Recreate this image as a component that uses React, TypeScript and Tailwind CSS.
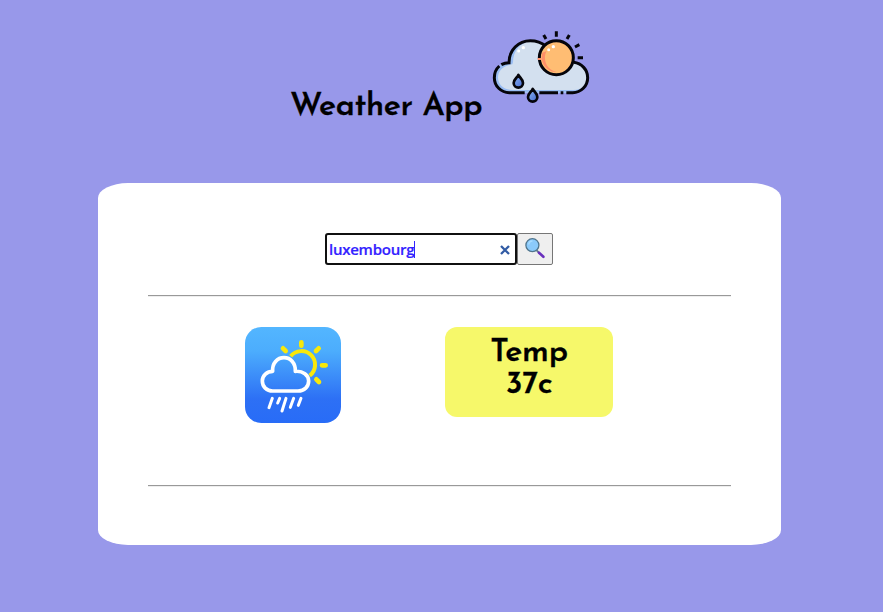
function CloudSunLogo() {
  return (
    <svg width="112" height="90" viewBox="0 0 336 270" className="-ml-2 -mr-2 block shrink-0" fill="none" aria-hidden="true">
      <defs>
        <linearGradient id="drop" x1="0" y1="0" x2="1" y2="1">
          <stop offset="0" stopColor="#8cb7f5" />
          <stop offset="1" stopColor="#4568cf" />
        </linearGradient>
      </defs>
      <path d="M72 212C47 212 28 192 28 167c0-25 19-45 44-46 0-37 27-65 62-65 29 0 50 15 59 40l72 25c25 2 43 22 43 46 0 25-19 45-44 45z" fill="#d3e0ef" />
      <path d="M72 212C47 212 28 192 28 167c0-25 19-45 44-46 0-37 27-65 62-65l8 1c-34 2-58 28-58 64l-2 6c-25 2-43 18-43 39 0 23 18 38 43 38h183c14 0 27-4 37-14-8 14-22 22-38 22z" fill="#99bdf3" />
      <g stroke="#05050b" strokeWidth="9">
        <path d="M182 72C169 61 153 56 136 56c-36 0-64 29-64 66-8 0-16 2-23 6M43 132c-10 9-15 21-15 35 0 25 20 45 45 45h46M163 212h56M227 212h8M244 212h19c25 0 45-20 45-45 0-24-18-43-42-46" />
        <circle cx="214" cy="107" r="51" fill="#ffbd73" />
        <path d="M214 28v16M176 39l7 12M253 39l-7 12M270 75l13-7M278 107h16" />
      </g>
      <path d="M172 92c-9 29 14 58 43 58-20-5-33-18-35-39-1-9 1-17 5-24" fill="#ff8f68" />
      <path d="M158 108v6h11v-6z" fill="#ff8f68" />
      <g fill="white">
        <circle cx="101" cy="87" r="4.5" /><circle cx="115" cy="77" r="5" />
        <circle cx="191" cy="83" r="4.5" /><circle cx="205" cy="74" r="5" />
      </g>
      <g fill="url(#drop)" stroke="#05050b" strokeWidth="8" strokeLinejoin="round">
        <path d="M100 159c-4 9-14 13-14 24a14 14 0 0 0 28 0c0-11-9-15-14-24z" />
        <path d="M143 201c-4 9-14 13-14 24a14 14 0 0 0 28 0c0-11-9-15-14-24z" />
      </g>
    </svg>
  );
}

function WeatherTile() {
  return (
    <svg width="96" height="96" viewBox="21 21 288 288" className="block shrink-0" fill="none" aria-hidden="true">
      <defs>
        <linearGradient id="sky" x1="0" y1="0" x2="0" y2="1">
          <stop offset="0" stopColor="#53b6ff" />
          <stop offset=".25" stopColor="#4cadfd" />
          <stop offset=".75" stopColor="#2d70f5" />
          <stop offset="1" stopColor="#286cf7" />
        </linearGradient>
      </defs>
      <rect x="21" y="21" width="288" height="288" rx="49" fill="url(#sky)" />
      <g stroke="#f8e80b">
        <path d="M158 109a41 41 0 1 1 57 58" strokeWidth="12" />
        <g strokeWidth="14" strokeLinecap="round">
          <path d="M190 67v10M135 85l8 8M242 85l-8 8M252 136h11M235 178l8 8" />
        </g>
      </g>
      <path d="M104 213c-18 0-31-13-31-30 0-16 14-29 31-29-2-24 14-41 34-41s35 17 34 41c23-2 40 12 40 29s-13 30-32 30z" stroke="white" strokeWidth="11" strokeLinejoin="round" />
      <g stroke="white" strokeWidth="9" strokeLinecap="round">
        <path d="M103 235l-10 28M125 235l-6 14M144 235l-12 38M167 235l-10 27M189 235l-8 21" />
      </g>
    </svg>
  );
}

function Magnifier() {
  return (
    <svg width="24" height="24" viewBox="0 0 24 24" className="block" aria-hidden="true">
      <path d="M12.4 13.2l2.8 2.8" stroke="#657b8c" strokeWidth="1.8" />
      <path d="M15 15.7l4.4 4.1" stroke="#6930bd" strokeWidth="2.6" strokeLinecap="round" />
      <circle cx="8.4" cy="8.2" r="6.5" fill="#8bcafb" stroke="#50758d" strokeWidth="1.3" />
      <path d="M4.7 7.5A4 4 0 0 1 8.5 4" fill="none" stroke="#a9dcff" strokeWidth="1.4" />
    </svg>
  );
}

export default function App() {
  return (
    <main className="h-[612px] w-full overflow-hidden bg-[#9898ea] pt-[22px] font-['Josefin_Sans','Lato',sans-serif] text-black">
      <header className="ml-[290px] flex h-[161px] items-start">
        <h1 className="mt-[66px] w-[203px] whitespace-nowrap text-[32px] leading-[38px] font-semibold tracking-[-0.4px] [-webkit-text-stroke:0.3px_black]">Weather App</h1>
        <CloudSunLogo />
      </header>
      <section className="ml-[98px] h-[362px] w-[683px] bg-white px-[50px] pt-[50px] [border-radius:30px/15px]">
        <form className="ml-[177px] flex h-8" onSubmit={(event) => event.preventDefault()}>
          <div className="flex h-8 w-48 items-center rounded-[3px] border-2 border-[#101010] bg-white px-[2px]">
            <span className="font-['Open_Sans',sans-serif] text-[15px] leading-5 font-semibold tracking-[-0.25px] text-[#3322ff] [-webkit-text-stroke:0.2px_#3322ff]">luxembourg</span>
            <span className="h-[17px] w-px bg-[#3322ff]" />
            <svg width="10" height="10" viewBox="0 0 10 10" className="mt-px mr-[3px] ml-auto" aria-hidden="true"><path d="M1 1l8 8M9 1L1 9" stroke="#315ba4" strokeWidth="2.3" /></svg>
          </div>
          <button aria-label="Search" className="flex h-8 w-9 items-start rounded-[2px] border border-[#767676] bg-[#efefef] pl-[6px] pt-[3px]"><Magnifier /></button>
        </form>
        <hr className="mt-[30px] h-[2px] border-t border-b border-t-[#999999] border-b-[#eeeeee]" />
        <div className="flex h-[188px] items-start pl-[97px] pt-[30px]">
          <WeatherTile />
          <div className="ml-[104px] h-[90px] w-[168px] rounded-xl bg-[#f6f86a] pt-[10px] text-center text-[32px] leading-8 font-semibold tracking-[-0.3px] [-webkit-text-stroke:0.3px_black]">
            <div>Temp</div>
            <div>37c</div>
          </div>
        </div>
        <hr className="h-[2px] border-t border-b border-t-[#999999] border-b-[#eeeeee]" />
      </section>
    </main>
  );
}
